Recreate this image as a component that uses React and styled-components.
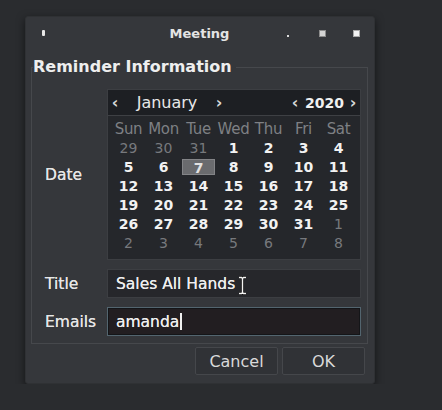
import React from 'react'
import styled, { createGlobalStyle } from 'styled-components'

const GlobalStyle = createGlobalStyle`
  html, body {
    margin: 0;
    background: #2a2c2f;
    font-family: 'DejaVu Sans', 'Liberation Sans', sans-serif;
    color: #ececec;
  }
`

const weekdays = ['Sun', 'Mon', 'Tue', 'Wed', 'Thu', 'Fri', 'Sat']

// January 2020, with the spill-over days of Dec and Feb
const buildDays = () => {
  const days = []
  ;[29, 30, 31].forEach((d) => days.push({ d, other: true }))
  for (let d = 1; d <= 31; d++) days.push({ d, other: false, selected: d === 7 })
  for (let d = 1; d <= 8; d++) days.push({ d, other: true })
  return days
}

const IBeam = () => (
  <svg width="9" height="19" viewBox="0 0 9 19">
    <path
      d="M1 1.5h2.5l1 1 1-1H8M4.5 2.5v14M1 17.5h2.5l1-1 1 1H8"
      fill="none"
      stroke="#111"
      strokeWidth="3"
    />
    <path
      d="M1 1.5h2.5l1 1 1-1H8M4.5 2.5v14M1 17.5h2.5l1-1 1 1H8"
      fill="none"
      stroke="#f4f4f4"
      strokeWidth="1.4"
    />
  </svg>
)

const App = () => {
  const days = buildDays()

  return (
    <>
      <GlobalStyle />
      <Page>
        <Window>
          <TitleBar>
            <Controls>
              <MenuDot />
            </Controls>
            <WindowTitle>Meeting</WindowTitle>
            <Controls $right>
              <Control>
                <MinDot />
              </Control>
              <Control>
                <Square />
              </Control>
              <Control>
                <Square $bright />
              </Control>
            </Controls>
          </TitleBar>

          <Body>
            <Group>
              <Legend>Reminder Information</Legend>
              <Form>
                <Label>Date</Label>
                <Calendar>
                  <CalHeader>
                    <NavGroup>
                      <Arrow>‹</Arrow>
                      <Month>January</Month>
                      <Arrow>›</Arrow>
                    </NavGroup>
                    <NavGroup>
                      <Arrow $small>‹</Arrow>
                      <Year>2020</Year>
                      <Arrow $small>›</Arrow>
                    </NavGroup>
                  </CalHeader>
                  <DayGrid>
                    {weekdays.map((w) => (
                      <Weekday key={w}>{w}</Weekday>
                    ))}
                    {days.map((day, i) => (
                      <Day key={i} $other={day.other}>
                        {day.selected ? <Selected>{day.d}</Selected> : day.d}
                      </Day>
                    ))}
                  </DayGrid>
                </Calendar>

                <Label>Title</Label>
                <Field>
                  Sales All Hands
                  <Pointer>
                    <IBeam />
                  </Pointer>
                </Field>

                <Label>Emails</Label>
                <Field $focused>
                  amanda
                  <Caret />
                </Field>
              </Form>
            </Group>

            <Buttons>
              <Button>Cancel</Button>
              <Button>OK</Button>
            </Buttons>
          </Body>
        </Window>
      </Page>
    </>
  )
}

export default App

const Page = styled.div`
  padding: 16px 0 0 25px;
`

const Window = styled.div`
  width: 350px;
  box-sizing: border-box;
  background: #35373b;
  border: 1px solid #2f3134;
  border-radius: 3px;
  box-shadow: 0 3px 8px rgba(0, 0, 0, 0.55);
`

const TitleBar = styled.div`
  height: 32px;
  display: grid;
  grid-template-columns: 1fr auto 1fr;
  align-items: center;
  padding: 0 8px 0 7px;
`

const WindowTitle = styled.div`
  font-size: 13px;
  font-weight: bold;
  color: #e4e4e4;
`

const Controls = styled.div`
  display: flex;
  gap: 14px;
  justify-content: ${(p) => (p.$right ? 'flex-end' : 'flex-start')};
`

const Control = styled.div`
  width: 20px;
  height: 14px;
  display: flex;
  align-items: center;
  justify-content: center;
`

const MenuDot = styled.span`
  display: block;
  width: 3px;
  height: 6px;
  margin-left: 9px;
  background: #e8e8e8;
  border-radius: 1px;
`

const MinDot = styled.span`
  display: block;
  width: 2px;
  height: 2px;
  margin-top: 5px;
  background: #dcdcdc;
`

const Square = styled.span`
  display: block;
  width: 5px;
  height: 5px;
  background: ${(p) => (p.$bright ? '#f2f2f2' : '#d4d4d4')};
  border: 1px solid ${(p) => (p.$bright ? '#a8a8a8' : '#8c8c8c')};
`

const Body = styled.div`
  padding: 9px 6px 8px 5px;
  display: flex;
  flex-direction: column;
`

const Group = styled.fieldset`
  margin: 0;
  min-width: 0;
  padding: 13px 6px 7px 13px;
  border: 1px solid #46484c;
`

const Legend = styled.legend`
  padding: 0 4px 0 0;
  margin-left: -12px;
  font-size: 16px;
  line-height: 18px;
  font-weight: bold;
  color: #eeeeee;
`

const Form = styled.div`
  display: grid;
  grid-template-columns: 62px 1fr;
  row-gap: 9px;
  align-items: center;
`

const Label = styled.div`
  font-size: 15.5px;
  color: #e6e6e6;
  text-shadow: 0 0 0.6px #e6e6e6;
`

const Calendar = styled.div`
  height: 171px;
  box-sizing: border-box;
  background: #25272b;
  border: 1px solid #3c3e42;
`

const CalHeader = styled.div`
  height: 25px;
  display: flex;
  align-items: center;
  justify-content: space-between;
  padding: 0 1px 0 0;
  background: #1d1f23;
  border-bottom: 1px solid #3e4044;
`

const NavGroup = styled.div`
  display: flex;
  align-items: center;
`

const Arrow = styled.span`
  width: ${(p) => (p.$small ? '12px' : '14px')};
  text-align: center;
  font-size: 16px;
  font-weight: bold;
  color: #d8d8d8;
`

const Month = styled.span`
  width: 90px;
  text-align: center;
  font-size: 16px;
  color: #e8e8e8;
`

const Year = styled.span`
  margin: 0 3px 0 4px;
  font-size: 14px;
  font-weight: bold;
  color: #f0f0f0;
`

const DayGrid = styled.div`
  display: grid;
  grid-template-columns: repeat(7, 1fr);
  grid-auto-rows: 19px;
  padding: 4px 4px 0 3px;
`

const Weekday = styled.div`
  text-align: center;
  line-height: 19px;
  font-size: 15px;
  color: #7e8084;
  letter-spacing: -0.3px;
`

const Day = styled.div`
  text-align: center;
  line-height: 19px;
  font-size: 14px;
  font-weight: ${(p) => (p.$other ? 'normal' : 'bold')};
  color: ${(p) => (p.$other ? '#77797d' : '#f2f2f2')};
`

const Selected = styled.span`
  display: block;
  margin: 1px 1px 0;
  height: 16px;
  line-height: 16px;
  box-sizing: border-box;
  background: #6a6b6e;
  border: 1px solid #838487;
  color: #e2e2e2;
`

const Field = styled.div`
  height: 29px;
  box-sizing: border-box;
  display: flex;
  align-items: center;
  padding: 0 8px;
  font-size: 15.5px;
  color: #eeeeee;
  text-shadow: 0 0 0.6px #eeeeee;
  background: ${(p) => (p.$focused ? '#221e21' : '#26272b')};
  border: 1px solid ${(p) => (p.$focused ? '#53656f' : '#3c3e42')};
  box-shadow: ${(p) => (p.$focused ? 'inset 0 0 0 1px #141518' : 'none')};
`

const Pointer = styled.span`
  display: flex;
  margin: 3px 0 0 3px;
`

const Caret = styled.span`
  width: 1.5px;
  height: 17px;
  margin-left: 1px;
  background: #f0f0f0;
`

const Buttons = styled.div`
  display: flex;
  justify-content: flex-end;
  gap: 4px;
  margin-top: 3px;
  padding-right: 3px;
`

const Button = styled.div`
  width: 83px;
  height: 28px;
  box-sizing: border-box;
  display: flex;
  align-items: center;
  justify-content: center;
  font-size: 16px;
  color: #dadada;
  background: #303236;
  border: 1px solid #45474b;
  border-radius: 2px;
`
